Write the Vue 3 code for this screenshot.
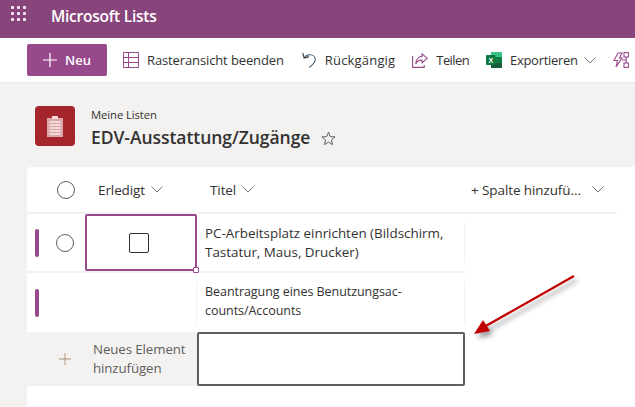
<script setup>
const dots = Array.from({ length: 9 }, (_, i) => i)
const commands = [
  { id: 'grid', label: 'Rasteransicht beenden' },
  { id: 'undo', label: 'Rückgängig' },
  { id: 'share', label: 'Teilen' },
  { id: 'excel', label: 'Exportieren' }
]
</script>

<template>
  <div class="page">
    <header class="suite">
      <div class="waffle"><i v-for="d in dots" :key="d"></i></div>
      <span class="brand">Microsoft Lists</span>
    </header>

    <nav class="toolbar">
      <button class="new-btn">
        <svg width="14" height="14" viewBox="0 0 14 14"><path d="M7 0v14M0 7h14" stroke="#fff" stroke-width="1.2" fill="none"/></svg>
        <span>Neu</span>
      </button>
      <div v-for="c in commands" :key="c.id" class="cmd" :class="'cmd-' + c.id">
        <svg v-if="c.id === 'grid'" width="16" height="16" viewBox="0 0 16 16" fill="none" stroke="#98498c" stroke-width="1">
          <path d="M.5.5h15v15H.5zM.5 5.500h15M.5 10.500h15M5.500.5v15"/>
        </svg>
        <svg v-else-if="c.id === 'undo'" width="14" height="16" viewBox="0 0 14 16" fill="none" stroke-width="1.1">
          <path d="M.8 1.200 2.200 6 7 4.600" stroke="#323130"/>
          <path d="M2.200 6C3.500 3.600 5.600 2.800 8 2.800c3 0 5.200 2.200 5.200 5 0 3-2.600 4.600-5.700 7.700" stroke="#3a5874"/>
        </svg>
        <svg v-else-if="c.id === 'share'" width="16" height="15" viewBox="0 0 16 15" fill="none" stroke="#98498c" stroke-width="1.1">
          <path d="M.6 3v11.400h11.600V12"/>
          <path d="M10 .8 15.400 5.400 10 9.800V7.200C7.400 7 5 8.200 3.800 11 3.800 7 6 3.600 10 3.400z"/>
        </svg>
        <svg v-else width="16" height="16" viewBox="0 0 16 16">
          <path d="M5 0h10a1 1 0 0 1 1 1v4H5z" fill="#33c481"/>
          <path d="M5 5h11v6H5z" fill="#107c41"/>
          <path d="M5 11h11v4a1 1 0 0 1-1 1H5z" fill="#185c37"/>
          <rect y="3" width="9.500" height="10" rx="1" fill="#0f7a40"/>
          <text x="4.700" y="11" class="x-mark">X</text>
        </svg>
        <span>{{ c.label }}</span>
      </div>
      <svg class="chev export-chev" width="12" height="7" viewBox="0 0 12 7"><path d="M.5.5 6 6l5.500-5.500" fill="none" stroke="#797775"/></svg>
      <svg class="flow" width="16" height="16" viewBox="0 0 16 16" fill="none" stroke="#98498c" stroke-width="1.1">
        <path d="M5 1h4L6.500 6H9l-6 9 1.500-6.500H1z"/>
        <rect x="11" y=".6" width="4.400" height="4.400"/>
        <rect x="11" y="11" width="4.400" height="4.400"/>
        <path d="M13.200 5v6M9 8h4.200"/>
      </svg>
    </nav>

    <main class="content">
      <section class="title-row">
        <div class="tile">
          <svg width="16" height="21" viewBox="0 0 16 21">
            <path d="M0 2h16v19H0z" fill="#dba6a8"/>
            <path d="M5 0h6v3H5z" fill="#f3d9da"/>
            <path d="M2.500 6h11M2.500 9h11M2.500 12h11M2.500 15h11M2.500 18h11" stroke="#f7e8e8" stroke-width="1.300"/>
          </svg>
        </div>
        <div class="title-text">
          <div class="crumb">Meine Listen</div>
          <div class="title-line">
            <h1>EDV-Ausstattung/Zugänge</h1>
            <svg width="15" height="15" viewBox="0 0 15 15"><path d="M7.500 1.200 9.300 5.600l4.800.3-3.700 3 1.200 4.700-4.100-2.600-4.100 2.600 1.200-4.700-3.700-3 4.800-.3z" fill="none" stroke="#605e5c"/></svg>
          </div>
        </div>
      </section>

      <section class="card">
        <div class="grid-head">
          <div class="sel"><span class="circle"></span></div>
          <div class="col col-done">Erledigt
            <svg class="chev" width="12" height="7" viewBox="0 0 12 7"><path d="M.5.5 6 6l5.500-5.500" fill="none" stroke="#797775"/></svg>
          </div>
          <div class="col col-title">Titel
            <svg class="chev" width="12" height="7" viewBox="0 0 12 7"><path d="M.5.5 6 6l5.500-5.500" fill="none" stroke="#797775"/></svg>
          </div>
          <div class="col col-add">+ Spalte hinzufü...
            <svg class="chev chev-add" width="12" height="7" viewBox="0 0 12 7"><path d="M.5.5 6 6l5.500-5.500" fill="none" stroke="#797775"/></svg>
          </div>
        </div>

        <div class="row row-a">
          <div class="mark"><i></i></div>
          <div class="sel sel-row"><span class="circle"></span></div>
          <div class="done-cell active">
            <span class="box"></span>
            <b class="handle"></b>
          </div>
          <div class="title-cell">PC-Arbeitsplatz einrichten (Bildschirm, Tastatur, Maus, Drucker)</div>
        </div>

        <div class="row row-b">
          <div class="mark"><i></i></div>
          <div class="sel sel-row"></div>
          <div class="done-cell"></div>
          <div class="title-cell strong">Beantragung eines Benutzungsac-<br>counts/Accounts</div>
        </div>

        <div class="row-new">
          <div class="add-label">
            <svg width="12" height="12" viewBox="0 0 12 12"><path d="M6 0v12" stroke="#bd9678"/><path d="M0 6h12" stroke="#a58c78"/></svg>
            <span>Neues Element<br>hinzufügen</span>
          </div>
          <div class="input-box"></div>
        </div>
      </section>
    </main>

    <svg class="arrow" width="120" height="70" viewBox="0 0 120 70">
      <defs>
        <filter id="sh" x="-20%" y="-30%" width="150%" height="170%">
          <feDropShadow dx="3" dy="4" stdDeviation="2.500" flood-color="#000" flood-opacity=".4"/>
        </filter>
      </defs>
      <g filter="url(#sh)">
        <path d="M104 3 14 54" stroke="#c00000" stroke-width="2.200" fill="none"/>
        <path d="M4 61 13 47 20 58z" fill="#c00000"/>
      </g>
    </svg>
  </div>
</template>

<style>
html, body { margin: 0; background: #f3f2f1; }
</style>

<style scoped>
.page {
  position: relative;
  width: 635px;
  height: 407px;
  overflow: hidden;
  background: #f3f2f1;
  font-family: "Open Sans", "Noto Sans", sans-serif;
  color: #323130;
}
.suite {
  height: 38px;
  background: #88457c;
  display: flex;
  align-items: center;
  color: #fff;
}
.waffle {
  width: 15px;
  margin: 0 0 12px 11px;
  display: grid;
  grid-template-columns: repeat(3, 3px);
  gap: 3px;
}
.waffle i { width: 3px; height: 3px; background: #f6eaf3; border-radius: 1px; }
.brand { margin-left: 25px; margin-bottom: 7px; font-size: 15.500px; font-weight: 600; letter-spacing: -.25px; }

.toolbar {
  height: 44px;
  background: #fff;
  box-shadow: 0 1px 1px #e9e8e7;
  display: flex;
  align-items: center;
  padding-left: 27px;
  white-space: nowrap;
  font-size: 13px;
  letter-spacing: -.12px;
}
.new-btn {
  width: 80px;
  height: 32px;
  margin-right: 16px;
  border: 0;
  border-radius: 2px;
  background: #98498c;
  color: #fff;
  font: 600 13px "Open Sans", sans-serif;
  display: flex;
  align-items: center;
  padding: 0 0 0 16px;
  gap: 8px;
}
.cmd { display: flex; align-items: center; gap: 8px; }
.cmd-grid { margin-right: 18px; }
.cmd-undo { margin-right: 17px; gap: 9px; letter-spacing: .18px; }
.cmd-share { margin-right: 17px; letter-spacing: -.6px; }
.cmd-excel { letter-spacing: -.3px; }
.x-mark { font: 700 7px "Liberation Sans", sans-serif; fill: #fff; text-anchor: middle; }
.export-chev { margin-left: 9px; }
.flow { margin-left: 17px; flex: none; }

.title-row {
  height: 85px;
  padding: 24px 0 0 35px;
  box-sizing: border-box;
  display: flex;
}
.tile {
  width: 40px;
  height: 40px;
  border-radius: 4px;
  background: #a4262c;
  display: flex;
  align-items: center;
  justify-content: center;
}
.title-text { margin-left: 16px; }
.crumb { font-size: 11.300px; line-height: 17px; letter-spacing: -.1px; }
.title-line { display: flex; align-items: center; margin-top: 2px; }
.title-line h1 {
  margin: 0 11px 0 0;
  font-size: 17.500px;
  line-height: 24px;
  font-weight: 600;
  letter-spacing: -.05px;
}
.title-line svg { margin-top: 2px; }

.card {
  margin-left: 27px;
  height: 240px;
  background: #fff;
  border-radius: 4px 0 0 0;
}
.grid-head {
  width: 590px;
  height: 47px;
  box-sizing: border-box;
  border-bottom: 2px solid #f3f2f1;
  display: flex;
  align-items: center;
  font-size: 13.500px;
  letter-spacing: -.1px;
  white-space: nowrap;
}
.sel { width: 58px; display: flex; justify-content: center; padding-left: 20px; box-sizing: border-box; }
.circle {
  width: 16px;
  height: 16px;
  border: 1px solid #605e5c;
  border-radius: 50%;
  display: block;
}
.col { display: flex; align-items: center; font-weight: 400; }
.col-done { margin-left: 13px; width: 112px; }
.col-title { width: 261px; }
.chev { margin-left: 6px; flex: none; }
.chev-add { margin-left: 11px; }

.row {
  width: 438px;
  display: flex;
  font-size: 12.500px;
  line-height: 19px;
  letter-spacing: -.05px;
}
.row-a { height: 57px; border-bottom: 2px solid #f3f2f1; }
.row-b { height: 59px; }
.mark { width: 8px; margin-left: 8px; display: flex; align-items: center; flex: none; }
.mark i { width: 4px; height: 28px; border-radius: 2px; background: #98498c; display: block; }
.sel-row { width: 42px; padding: 0; align-items: center; justify-content: flex-start; padding-left: 13px; }
.done-cell {
  width: 112px;
  flex: none;
  box-sizing: border-box;
  display: flex;
  align-items: center;
  justify-content: center;
  position: relative;
}
.done-cell.active { border: 2px solid #98498c; border-radius: 2px; padding-right: 4px; }
.box {
  width: 18px;
  height: 18px;
  border: 1px solid #323130;
  border-radius: 2px;
  display: block;
}
.handle {
  position: absolute;
  right: -4px;
  bottom: -4px;
  width: 4px;
  height: 4px;
  border: 1px solid #98498c;
  background: #fff;
  border-radius: 1px;
}
.title-cell {
  flex: 1;
  margin: 8px 0;
  padding: 0 8px;
  display: flex;
  align-items: center;
  border-right: 1px solid #f3f2f1;
}
.row-a .title-cell { font-size: 13.400px; letter-spacing: 0; }
.title-cell.strong { display: block; padding-top: 1px; font-weight: 500; }
.row-b .title-cell { border-left: 1px solid #f3f2f1; margin-left: -1px; }
.row-new { display: flex; height: 54px; width: 438px; }
.add-label {
  width: 170px;
  flex: none;
  background: #f3f2f1;
  display: flex;
  align-items: center;
  color: #605e5c;
  font-size: 13.300px;
  line-height: 19px;
  letter-spacing: -.1px;
}
.add-label svg { margin-left: 32px; margin-right: 22px; flex: none; }
.input-box {
  flex: 1;
  box-sizing: border-box;
  background: #fff;
  border: 2px solid #605e5c;
  border-radius: 2px;
}

.arrow { position: absolute; left: 470px; top: 273px; overflow: visible; }
</style>
